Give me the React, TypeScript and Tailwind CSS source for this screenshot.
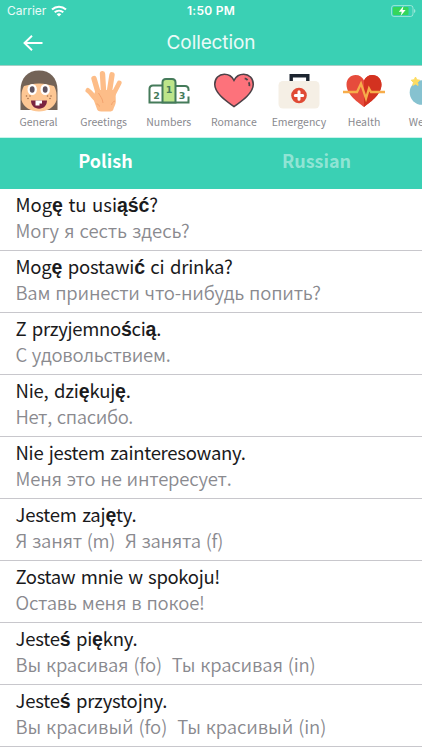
import React from "react";

const GeneralIcon = () => (
  <svg width="40" height="42" viewBox="0 0 40 42">
    <path d="M1.500 40V20C1.500 8 9 .5 20 .5S38.500 8 38.500 20V40z" fill="#736357" />
    <path d="M2.500 25c0-4 1-6 2.500-9C9 15 14 13.500 20 13.500S31 15 35 16c1.500 3 2.500 5 2.500 9v5C36 37 28 41.500 20 41.500S4 37 2.500 30z" fill="#fdc794" />
    <ellipse cx="13.200" cy="19.500" rx="4.700" ry="5.500" fill="#fff" />
    <ellipse cx="26.200" cy="19.500" rx="4.700" ry="5.500" fill="#fff" />
    <ellipse cx="13.200" cy="19.500" rx="2.400" ry="3.200" fill="#5d5360" />
    <ellipse cx="26.200" cy="19.500" rx="2.400" ry="3.200" fill="#5d5360" />
    <g fill="#a3704c">
      <circle cx="7.500" cy="26" r=".8" />
      <circle cx="11" cy="26" r=".8" />
      <circle cx="9" cy="28.500" r=".8" />
      <circle cx="28.500" cy="26" r=".8" />
      <circle cx="32" cy="26" r=".8" />
      <circle cx="31" cy="28.500" r=".8" />
    </g>
    <path d="M12 30.500h16c0 5-3.500 8.200-8 8.200s-8-3.200-8-8.200z" fill="#7a2340" />
    <path d="M16.500 30.500h6.500v3h-2.500v2h-4z" fill="#fff" />
  </svg>
);

const GreetingsIcon = () => (
  <svg width="40" height="42" viewBox="0 0 40 42">
    <g stroke="#fdbd88" strokeLinecap="round" fill="none">
      <path d="M14.500 24 10 8.500" strokeWidth="5.400" />
      <path d="M19.500 21 18.500 3.800" strokeWidth="5.400" />
      <path d="M25.500 21 28 4.800" strokeWidth="5.400" />
      <path d="M29 25 35.200 13" strokeWidth="4.800" />
      <path d="M15 31C10 29 8 23 4 20.500" strokeWidth="5" />
    </g>
    <path d="M11.500 20h20l.3 12c-.2 3-2 5-2.500 7.500-.3 1.500-2 2-4 2h-8c-3 0-4-1-4.500-3L9 28z" fill="#fdbd88" />
    <path d="M14.500 23c2 4 4 5 4.500 10M31 31c-2 .5-3 2-3.500 4M12.500 34c1.500 0 2.500 1 3 2.500" stroke="#f3a36e" strokeWidth="1" fill="none" />
  </svg>
);

const NumbersIcon = () => (
  <svg width="42" height="28" viewBox="0 0 42 28">
    <path d="M14 8.500H5Q1.500 8.500 1.500 12V25.500H40.500V19.500M27.500 9H37Q40.500 9 40.500 12.500V14" fill="none" stroke="#457b5a" strokeWidth="2" />
    <path d="M14.500 25.500V5.500Q14.500 2 18 2h6Q27.500 2 27.500 5.500v20z" fill="#bde58a" stroke="#457b5a" strokeWidth="2" />
    <g fill="#457b5a" fontFamily="DejaVu Sans, sans-serif" fontWeight="700" fontSize="9.500" textAnchor="middle">
      <text x="8.500" y="21.500">2</text>
      <text x="21" y="16">1</text>
      <text x="34" y="21.500">3</text>
    </g>
  </svg>
);

const RomanceIcon = () => (
  <svg width="42" height="35" viewBox="0 0 42 36">
    <path d="M21 34.500C15 30 1.200 21.500 1.200 11.500 1.200 5.500 5.500 1.300 11 1.300c4.500 0 8 2.200 10 6.200 2-4 5.500-6.200 10-6.200 5.500 0 9.800 4.200 9.800 10.200C40.800 21.500 27 30 21 34.500z" fill="#fd727b" stroke="#4d4248" strokeWidth="1.600" />
    <path d="M32 5.500c1.300.2 2.300.9 3 1.800M36.200 9.500c.6 1.200.8 2.500.6 4" stroke="#4d4248" strokeWidth="1.800" fill="none" />
  </svg>
);

const EmergencyIcon = () => (
  <svg width="42" height="36" viewBox="0 0 42 36">
    <path d="M13.200 9V2.700H29.800V9" fill="none" stroke="#1d2530" strokeWidth="3.400" />
    <rect x=".5" y="8" width="41" height="27.500" rx="4.500" fill="#f5efe5" />
    <circle cx="21" cy="22.500" r="7.800" fill="#e04a34" />
    <path d="M21 18.800v7.400M17.300 22.500h7.400" stroke="#fff" strokeWidth="3" strokeLinecap="round" />
  </svg>
);

const HealthIcon = () => (
  <svg width="42" height="34" viewBox="0 0 42 34">
    <path d="M21 33C16 29 3.500 21 3.500 10.500 3.500 5 7.500 1 12.500 1c4 0 7 2 8.500 5.500C22.500 3 25.500 1 29.500 1c5 0 9 4 9 9.500C38.500 21 26 29 21 33z" fill="#e64c3c" />
    <path d="M21 6.500C22.500 3 25.500 1 29.500 1c5 0 9 4 9 9.500C38.500 21 26 29 21 33z" fill="#d33220" />
    <path d="M0 18h14l4-8.500 5 15 3-10 2 3.500h14" fill="none" stroke="#f7ad4a" strokeWidth="2.300" />
  </svg>
);

const WeatherIcon = () => (
  <svg width="42" height="28" viewBox="0 0 42 28">
    <circle cx="14" cy="15.500" r="12.300" fill="#86c2d0" />
    <path d="m7.500 0 1.300 2.800 3 .4-2.300 2.200.6 3L7.500 7 4.800 8.400l.6-3L3.200 3.200l3-.4z" fill="#fddc62" stroke="#fddc62" />
  </svg>
);

const categories = [
  { name: "General", icon: <GeneralIcon /> },
  { name: "Greetings", icon: <GreetingsIcon /> },
  { name: "Numbers", icon: <NumbersIcon /> },
  { name: "Romance", icon: <RomanceIcon /> },
  { name: "Emergency", icon: <EmergencyIcon /> },
  { name: "Health", icon: <HealthIcon /> },
  { name: "Weather", icon: <WeatherIcon /> },
];

const phrases = [
  { pl: "Mogę tu usiąść?", ru: "Могу я сесть здесь?", plSpacing: -0.05, ruSpacing: -0.05 },
  { pl: "Mogę postawić ci drinka?", ru: "Вам принести что-нибудь попить?", plSpacing: -0.19, ruSpacing: -0.2 },
  { pl: "Z przyjemnością.", ru: "С удовольствием.", plSpacing: -0.27, ruSpacing: -0.27 },
  { pl: "Nie, dziękuję.", ru: "Нет, спасибо.", plSpacing: -0.2, ruSpacing: -0.35 },
  { pl: "Nie jestem zainteresowany.", ru: "Меня это не интересует.", plSpacing: -0.27, ruSpacing: -0.2 },
  { pl: "Jestem zajęty.", ru: "Я занят (m)  Я занята (f)", plSpacing: -0.2, ruSpacing: -0.26 },
  { pl: "Zostaw mnie w spokoju!", ru: "Оставь меня в покое!", plSpacing: -0.35, ruSpacing: -0.18 },
  { pl: "Jesteś piękny.", ru: "Вы красивая (fo)  Ты красивая (in)", plSpacing: -0.2, ruSpacing: -0.15 },
  { pl: "Jesteś przystojny.", ru: "Вы красивый (fo)  Ты красивый (in)", plSpacing: -0.2, ruSpacing: -0.1 },
];

// Polish letters with diacritics are shown in a bold fallback face
const renderPolish = (text: string) =>
  text.split(/([ąćęłńóśźż]+)/).map((part, i) =>
    i % 2 === 1 ? (
      <span key={i} className="font-['Liberation_Sans',sans-serif] font-bold text-[19.500px] leading-none">{part}</span>
    ) : (
      part
    )
  );

const App: React.FC = () => {
  return (
    <div className="w-full h-[750px] overflow-hidden flex flex-col bg-white font-['Noto_Sans_CJK_SC',sans-serif]">
      <header className="h-[65px] shrink-0 bg-[#3ad0b4] text-white font-[Inter,sans-serif]">
        <div className="grid grid-cols-3 items-center h-[22px] px-[7px] text-[12px] leading-none">
          <div className="flex items-center gap-[5px]">
            <span className="text-white/90">Carrier</span>
            <svg className="-mt-px" width="16" height="12" viewBox="0 0 16 12" fill="none" stroke="#fff" strokeWidth="2">
              <path d="M1 4.500C5 .8 11 .8 15 4.500M3.700 7.300c2.500-2.200 6.100-2.200 8.600 0" />
              <path d="M8 11.500 5.700 9.200c1.300-1.200 3.300-1.200 4.600 0z" fill="#fff" stroke="none" />
            </svg>
          </div>
          <span className="text-center font-semibold tracking-[0.250px]">1:50 PM</span>
          <svg className="justify-self-end -mr-px -mt-px" width="25" height="12" viewBox="0 0 25 12">
            <rect x=".5" y=".5" width="21.500" height="11" rx="2.500" fill="none" stroke="#fff" strokeOpacity=".45" />
            <rect x="2" y="2" width="15.500" height="8" rx="1" fill="#35d65b" />
            <path d="M23.200 4v4c1.500-.7 1.500-3.300 0-4z" fill="#fff" fillOpacity=".6" />
            <path d="M12.500 1 7.800 6.700h3L9.600 11l5-6h-3z" fill="#fff" />
          </svg>
        </div>
        <div className="grid grid-cols-3 items-center h-[42px]">
          <button className="justify-self-start ml-[23px]" aria-label="Back">
            <svg width="20" height="16" viewBox="0 0 20 16" fill="none" stroke="#fff" strokeWidth="1.900">
              <path d="M19.500 8H1.500M9 .8 1.500 8 9 15.200" />
            </svg>
          </button>
          <h1 className="text-center text-[19px] leading-[24px] text-white/90 tracking-[-0.100px]">Collection</h1>
        </div>
      </header>

      <nav className="h-[73px] shrink-0 flex overflow-hidden pl-[6px] border-t border-t-[#a5cfc6] border-b border-b-[#c8f5ec]">
        {categories.map((category) => (
          <div key={category.name} className="w-[65.100px] shrink-0 flex flex-col items-center">
            <div className="h-[49px] flex items-center">{category.icon}</div>
            <span className="text-[10.500px] leading-[14px] text-[#8a8a8f]">{category.name}</span>
          </div>
        ))}
      </nav>

      <div className="h-[50.500px] shrink-0 grid grid-cols-2 items-center text-center bg-[#3ad0b4] text-[18px] font-bold text-white">
        <span className="pb-1.5">Polish</span>
        <span className="pb-1.5 text-white/45">Russian</span>
      </div>

      <main>
        {phrases.map((phrase) => (
          <div key={phrase.pl} className="h-[62.120px] pl-[15.500px] pt-[2px] border-b border-[#c8c7cc] whitespace-pre text-[18.500px] leading-[26px]">
            <p className="h-[26px] text-[#1a1a1c] [word-spacing:1.5px]" style={{ letterSpacing: phrase.plSpacing }}>{renderPolish(phrase.pl)}</p>
            <p className="h-[26px] font-[350] text-[#8a8a8f] [word-spacing:1px]" style={{ letterSpacing: phrase.ruSpacing }}>{phrase.ru}</p>
          </div>
        ))}
      </main>
    </div>
  );
};

export default App;
